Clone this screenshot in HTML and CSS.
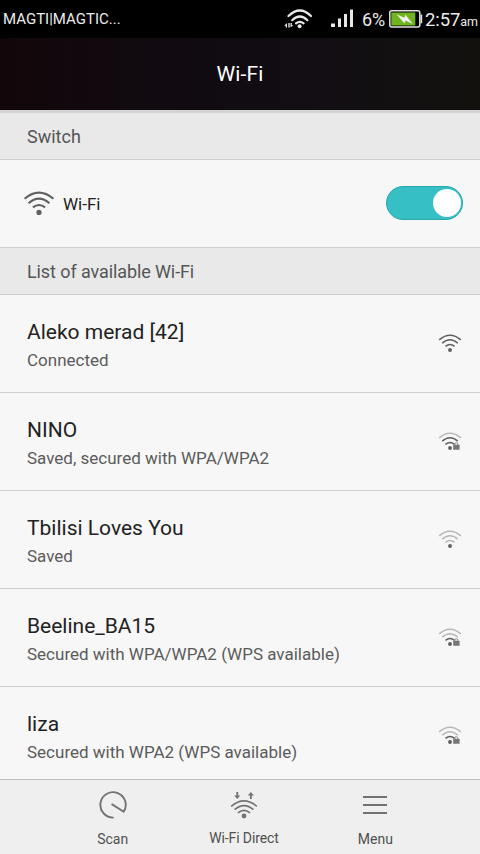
FILE: index.html
```html
<!DOCTYPE html>
<html lang="en">
<head>
<meta charset="utf-8">
<title>Wi-Fi</title>
<link rel="stylesheet" href="styles.css">
</head>
<body>
<svg class="defs" width="0" height="0">
  <symbol id="wifi" viewBox="0 0 32 26">
    <path class="arc outer" d="M1.6 7.8Q16-4.6 30.4 7.8"/>
    <path class="arc middle" d="M5.6 12.3Q16 2.9 26.4 12.3"/>
    <path class="arc inner" d="M9.9 16.4Q16 11.6 22.1 16.4"/>
    <circle class="dot" cx="16" cy="21.4" r="2.6"/>
  </symbol>
  <symbol id="lock" viewBox="0 0 7 8">
    <path d="M1.8 4V2.200a1.500 1.500 0 0 1 3 0V4" fill="none" stroke="#8a8a8a" stroke-width="1"/>
    <rect x=".2" y="2.800" width="6.400" height="5" rx=".4" fill="#777"/>
  </symbol>
</svg>
<div class="status">
  <span class="carrier">MAGTI|MAGTIC...</span>
  <svg class="status-wifi" width="30" height="22" viewBox="0 0 30 22">
    <g fill="none" stroke="#e8e8e8" stroke-width="2.200" stroke-linecap="round">
      <path d="M4.500 8Q15.800-3 27 8"/>
      <path d="M8.200 12.200Q15.800 4.800 23.400 12.200"/>
      <path d="M12 15.400Q15.800 12.200 19.600 15.400"/>
    </g>
    <circle cx="15.600" cy="18.300" r="2" fill="#e8e8e8"/>
    <path d="M.2 17.800 3 15V19.500H1.700V17.800zM4.300 15h1.400v4.500H4.300zM6.500 15h1.300v2h1.500L6.500 19.500z" fill="#e8e8e8"/>
  </svg>
  <svg class="signal" width="23" height="19" viewBox="0 0 23 19">
    <path d="M0 14.500h4V18H0zM7 9.500h3V18H7zM13 5h3v13h-3zM19 .6h3V18h-3z" fill="#e8e8e8"/>
  </svg>
  <span class="percent">6%</span>
  <svg class="battery" width="34" height="18" viewBox="0 0 34 18">
    <rect x=".8" y=".8" width="30" height="16.200" rx="2" fill="none" stroke="#e2e2e2" stroke-width="1.500"/>
    <path d="M31.500 4.500h1.700v8.800h-1.700z" fill="#e2e2e2"/>
    <rect x="2.300" y="2.500" width="24" height="13" fill="#70b51f"/>
    <path d="m7.500 4.200 7.800 3.500 1.100-3 7.400 9.200-7.200-3.500-1.300 2.800z" fill="#f2f2f2"/>
  </svg>
  <span class="clock">2:57<small>am</small></span>
</div>
<header class="header"><h1>Wi-Fi</h1></header>
<main class="content">
  <h2 class="section first">Switch</h2>
  <div class="switch-row">
    <svg class="wifi large"><use href="#wifi"/></svg>
    <span class="switch-label">Wi-Fi</span>
    <span class="toggle"><span class="knob"></span></span>
  </div>
  <h2 class="section list-title">List of available Wi-Fi</h2>
  <ul class="networks">
    <li class="network"><div><p class="name">Aleko merad [42]</p><p class="detail">Connected</p></div><span class="strength"><svg class="wifi"><use href="#wifi"/></svg></span></li>
    <li class="network"><div><p class="name">NINO</p><p class="detail">Saved, secured with WPA/WPA2</p></div><span class="strength s2"><svg class="wifi"><use href="#wifi"/></svg><svg class="lock"><use href="#lock"/></svg></span></li>
    <li class="network"><div><p class="name">Tbilisi Loves You</p><p class="detail">Saved</p></div><span class="strength s0"><svg class="wifi"><use href="#wifi"/></svg></span></li>
    <li class="network"><div><p class="name">Beeline_BA15</p><p class="detail">Secured with WPA/WPA2 (WPS available)</p></div><span class="strength s1"><svg class="wifi"><use href="#wifi"/></svg><svg class="lock"><use href="#lock"/></svg></span></li>
    <li class="network"><div><p class="name">liza</p><p class="detail">Secured with WPA2 (WPS available)</p></div><span class="strength s1"><svg class="wifi"><use href="#wifi"/></svg><svg class="lock"><use href="#lock"/></svg></span></li>
  </ul>
</main>
<nav class="bottom">
  <div class="action">
    <svg width="30" height="30" viewBox="0 0 30 30" fill="none" stroke="#737373" stroke-width="1.900"><path d="M15 26.600A12.700 12.700 0 1 1 25.700 20.800L14.200 13.400" stroke-linejoin="round" stroke-linecap="round"/></svg>
    <span>Scan</span>
  </div>
  <div class="action direct">
    <svg width="30" height="30" viewBox="0 0 30 30">
      <g fill="none" stroke="#737373" stroke-width="1.700">
        <path d="M2.200 15.300Q15 4.300 27.800 15.300"/><path d="M5.500 18.700Q15 10.500 24.500 18.700"/><path d="M9 21.900Q15 16.700 21 21.900"/>
      </g>
      <circle cx="15" cy="25" r="2.400" fill="#737373"/>
      <path d="M7.300 1h1.900v3.600h2.100L8.250 8 5.200 4.600h2.100zM20.900 8h1.900V4.400h2.100L21.850 1 18.800 4.400h2.100z" fill="#737373"/>
    </svg>
    <span>Wi-Fi Direct</span>
  </div>
  <div class="action">
    <svg width="30" height="30" viewBox="0 0 30 30" fill="#737373"><path d="M3 5h24v2H3zM3 13h24v2H3zM3 21h24v2H3z"/></svg>
    <span>Menu</span>
  </div>
</nav>
</body>
</html>
```

FILE: styles.css
```css
* { box-sizing: border-box; }
html, body { margin: 0; height: 100%; }
body {
  width: 480px;
  height: 854px;
  overflow: hidden;
  display: flex;
  flex-direction: column;
  background: #f7f7f7;
  color: #222;
  font-family: Roboto, sans-serif;
}
h1, h2, p, ul { margin: 0; padding: 0; font-weight: 400; }
svg { display: block; flex: none; }
.defs { position: absolute; }
.status {
  flex: 0 0 38px;
  display: flex;
  align-items: center;
  padding-left: 3px;
  background: #000;
  color: #ececec;
  white-space: nowrap;
}
.carrier { width: 281px; font-size: 15px; }
.status-wifi { margin-top: -1px; }
.signal { margin: -2px 0 0 17px; }
.percent { margin: 1px 0 0 8px; width: 26px; font-size: 18px; }
.battery { margin: -1px 0 0 1px; }
.clock { margin: 1px 0 0 2px; font-size: 18.500px; letter-spacing: -.1px; }
.clock small { font-size: 12.500px; }
.header {
  flex: 0 0 72px;
  display: flex;
  align-items: center;
  justify-content: center;
  background: linear-gradient(90deg, #12060a, #110b11 35%, #120e13 70%, #12110d);
  color: #fff;
}
.header h1 { font-size: 21px; letter-spacing: .1px; }
.content { flex: 1; min-height: 0; overflow: hidden; }
.section {
  height: 47px;
  padding: 0 27px;
  border-bottom: 1px solid #cfcfcf;
  background: #e9e9e9;
  color: #555;
  font-size: 18px;
  line-height: 47px;
}
.section.first { height: 50px; border-top: 3px solid #d3d3d3; }
.list-title { letter-spacing: -.1px; }
.switch-row {
  height: 88px;
  display: flex;
  align-items: center;
  padding: 0 17px 0 23px;
  border-bottom: 1px solid #cfcfcf;
}
.wifi { width: 24px; height: 19.500px; }
.wifi.large { width: 32px; height: 26px; margin-top: 1px; }
.arc { fill: none; stroke-width: 2.100; }
.outer { stroke: var(--outer, #606060); }
.middle { stroke: var(--middle, #606060); }
.inner { stroke: var(--inner, #606060); }
.dot { fill: #606060; }
.switch-label { flex: 1; margin: 1px 0 0 8px; font-size: 17px; }
.toggle {
  width: 77px;
  height: 34px;
  display: flex;
  align-items: center;
  justify-content: flex-end;
  padding-right: 1px;
  margin-bottom: 1px;
  border: 1px solid #28a9ad;
  border-radius: 17px;
  background: #36c0c6;
}
.knob { width: 28px; height: 28px; border-radius: 14px; background: #fff; }
.networks { list-style: none; }
.network {
  height: 98px;
  display: flex;
  justify-content: space-between;
  padding: 22px 18px 0 27px;
  border-bottom: 1px solid #cfcfcf;
}
.name { font-size: 21px; line-height: 30px; }
.detail { font-size: 17px; line-height: 26px; color: #5b5b5b; }
.strength { position: relative; width: 24px; height: 20px; margin-top: 17px; }
.lock { position: absolute; left: 15.300px; top: 9.500px; width: 7px; height: 8px; }
.s2 { --outer: #b8b8b8; }
.s1 { --outer: #b8b8b8; --middle: #b8b8b8; }
.s0 { --outer: #b8b8b8; --middle: #b8b8b8; --inner: #b8b8b8; }
.bottom {
  flex: 0 0 75px;
  display: flex;
  padding: 0 39px 0 47px;
  border-top: 1px solid #bdbdbd;
  background: #efefef;
}
.action {
  flex: 1 1 0;
  min-width: 0;
  display: flex;
  flex-direction: column;
  align-items: center;
  padding-top: 11px;
  color: #505050;
  font-size: 14px;
  line-height: 18px;
}
.action span { margin-top: 9px; }
.direct span { margin-top: 8px; letter-spacing: -.1px; }
```
